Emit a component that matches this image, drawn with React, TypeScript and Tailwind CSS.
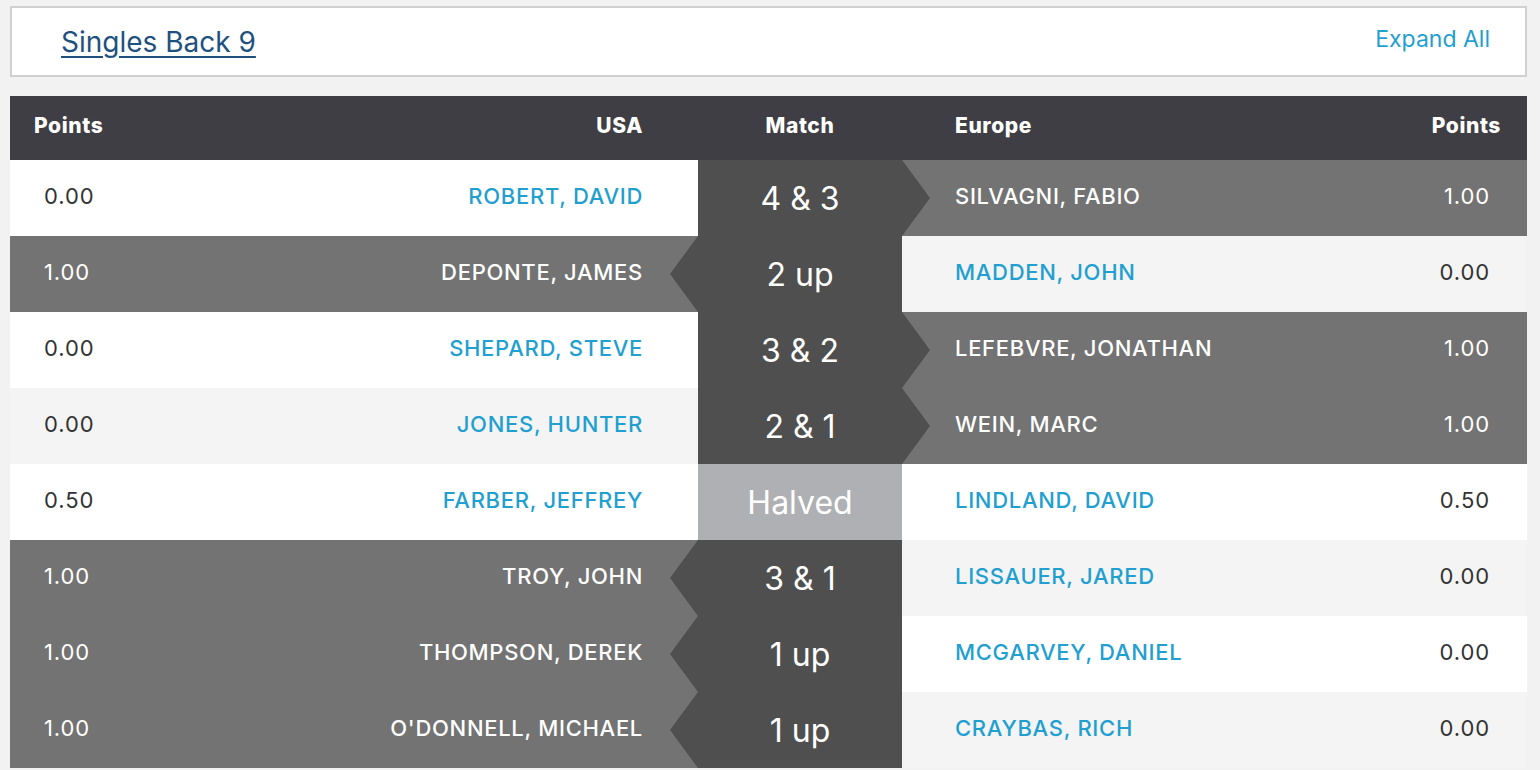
import React from 'react';

type Match = {
    usa: string;
    eur: string;
    usaPts: string;
    eurPts: string;
    result: string;
    winner: 'usa' | 'eur' | 'half';
};

const MATCHES: Match[] = [
    { usa: 'ROBERT, DAVID', eur: 'SILVAGNI, FABIO', usaPts: '0.00', eurPts: '1.00', result: '4 & 3', winner: 'eur' },
    { usa: 'DEPONTE, JAMES', eur: 'MADDEN, JOHN', usaPts: '1.00', eurPts: '0.00', result: '2 up', winner: 'usa' },
    { usa: 'SHEPARD, STEVE', eur: 'LEFEBVRE, JONATHAN', usaPts: '0.00', eurPts: '1.00', result: '3 & 2', winner: 'eur' },
    { usa: 'JONES, HUNTER', eur: 'WEIN, MARC', usaPts: '0.00', eurPts: '1.00', result: '2 & 1', winner: 'eur' },
    { usa: 'FARBER, JEFFREY', eur: 'LINDLAND, DAVID', usaPts: '0.50', eurPts: '0.50', result: 'Halved', winner: 'half' },
    { usa: 'TROY, JOHN', eur: 'LISSAUER, JARED', usaPts: '1.00', eurPts: '0.00', result: '3 & 1', winner: 'usa' },
    { usa: 'THOMPSON, DEREK', eur: 'MCGARVEY, DANIEL', usaPts: '1.00', eurPts: '0.00', result: '1 up', winner: 'usa' },
    { usa: "O'DONNELL, MICHAEL", eur: 'CRAYBAS, RICH', usaPts: '1.00', eurPts: '0.00', result: '1 up', winner: 'usa' },
];

const MatchRow: React.FC<{ m: Match; idx: number }> = ({ m, idx }) => {
    const light = idx % 2 === 0 ? 'bg-white' : 'bg-[#f4f4f4]';
    const usaWon = m.winner === 'usa';
    const eurWon = m.winner === 'eur';

    return (
        <div className="flex h-[76px]">
            <div className={`w-[688px] flex items-center justify-between pl-[34px] pr-[55px] pb-[3px] ${usaWon ? 'bg-[#737373]' : light}`}>
                <span className={usaWon ? 'text-white' : 'text-[#333333]'}>{m.usaPts}</span>
                <span className={`font-medium tracking-[0.7px] ${usaWon ? 'text-white' : 'text-[#1fa0d0]'}`}>{m.usa}</span>
            </div>
            <div className={`w-[204px] relative flex items-center justify-center text-[32px] tracking-normal text-white z-10 pt-[2px] ${m.winner === 'half' ? 'bg-[#afb0b3]' : 'bg-[#4f4f4f]'}`}>
                {usaWon && (
                    <div className="absolute left-[-28px] top-0 h-full w-[28px] bg-[#4f4f4f] [clip-path:polygon(100%_0,0_50%,100%_100%)]" />
                )}
                {eurWon && (
                    <div className="absolute right-[-28px] top-0 h-full w-[28px] bg-[#4f4f4f] [clip-path:polygon(0_0,100%_50%,0_100%)]" />
                )}
                <span>{m.result}</span>
            </div>
            <div className={`flex-1 flex items-center justify-between pl-[53px] pr-[37px] pb-[3px] ${eurWon ? 'bg-[#737373]' : light}`}>
                <span className={`font-medium tracking-[0.7px] ${eurWon ? 'text-white' : 'text-[#1fa0d0]'}`}>{m.eur}</span>
                <span className={eurWon ? 'text-white' : 'text-[#333333]'}>{m.eurPts}</span>
            </div>
        </div>
    );
};

const App: React.FC = () => {
    return (
        <div className="min-h-screen bg-[#f2f2f2] pl-[10px] pr-[13px] pt-[6px] font-['Inter',sans-serif] text-[22px] tracking-[0.9px]">
            <div className="h-[71px] bg-white border-2 border-[#d0d0d0] flex items-center justify-between pl-[49px] pr-[35px] tracking-normal">
                <a href="#" className="text-[28px] text-[#1f5180] underline underline-offset-[4px] decoration-2">Singles Back 9</a>
                <a href="#" className="text-[23px] text-[#1fa0d0] -mt-[4px]">Expand All</a>
            </div>

            <div className="mt-[19px]">
                <div className="flex h-[64px] bg-[#3f3e44] text-white font-extrabold text-[21px] tracking-[0.6px] pb-[4px]">
                    <div className="w-[688px] flex items-center justify-between pl-[24px] pr-[55px]">
                        <span>Points</span>
                        <span>USA</span>
                    </div>
                    <div className="w-[204px] flex items-center justify-center">Match</div>
                    <div className="flex-1 flex items-center justify-between pl-[53px] pr-[26px]">
                        <span>Europe</span>
                        <span>Points</span>
                    </div>
                </div>
                {MATCHES.map((m, i) => (
                    <MatchRow key={i} m={m} idx={i} />
                ))}
            </div>
        </div>
    );
};

export default App;
